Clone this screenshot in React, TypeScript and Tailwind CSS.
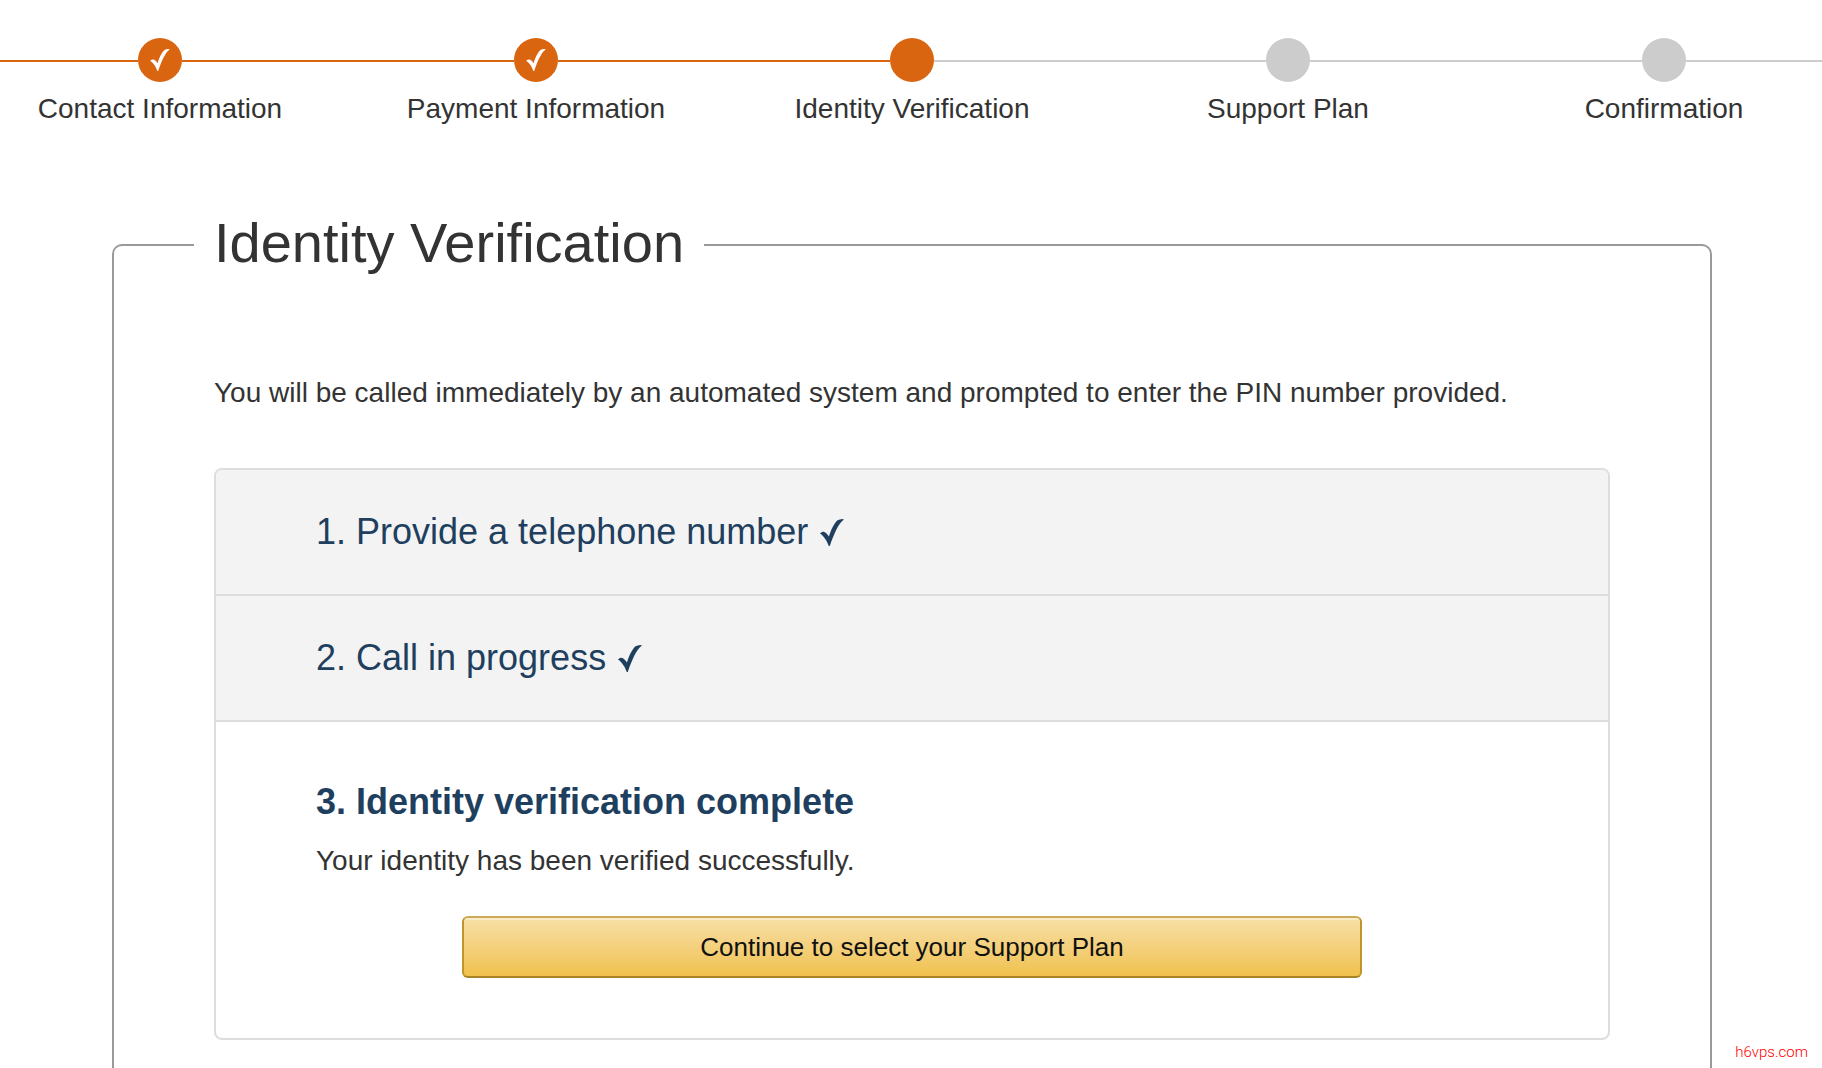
import React from 'react';
import { clsx } from 'clsx';

type StepStatus = 'done' | 'current' | 'upcoming';

interface WizardStep {
  label: string;
  status: StepStatus;
}

const wizardSteps: WizardStep[] = [
  { label: 'Contact Information', status: 'done' },
  { label: 'Payment Information', status: 'done' },
  { label: 'Identity Verification', status: 'current' },
  { label: 'Support Plan', status: 'upcoming' },
  { label: 'Confirmation', status: 'upcoming' },
];

const finishedSteps = ['1. Provide a telephone number', '2. Call in progress'];

const CheckMark: React.FC<{ className?: string }> = ({ className }) => (
  <svg viewBox="0 0 24 27" fill="currentColor" className={className} aria-hidden="true">
    <path d="M0 14.4C1.2 13.2 2.8 12.6 4 12.9C6 13.4 7.6 15.2 8.9 17.6C10.4 12.4 12.8 6.8 15.8 3C17.6 .8 19.6 .1 23.6 .1L23.4 1C19 4.2 14.4 13.4 9.8 27H8.8C7.4 22.6 4 17 0 14.4Z" />
  </svg>
);

const ProgressStep: React.FC<{ step: WizardStep }> = ({ step }) => {
  const reached = step.status !== 'upcoming';

  return (
    <li
      className="flex flex-col items-center"
      aria-current={step.status === 'current' ? 'step' : undefined}
    >
      <div className="flex w-full items-center">
        <span className={clsx('mt-0.5 h-0.5 flex-1', reached ? 'bg-[#da6510]' : 'bg-[#cccccc]')} />
        <span
          className={clsx(
            'flex size-11 items-center justify-center rounded-full text-white',
            reached ? 'bg-[#da6510]' : 'bg-[#cccccc]'
          )}
        >
          {step.status === 'done' && <CheckMark className="h-[22px] w-5" />}
        </span>
        <span
          className={clsx(
            'mt-0.5 h-0.5 flex-1',
            step.status === 'done' ? 'bg-[#da6510]' : 'bg-[#cccccc]'
          )}
        />
      </div>
      <span className="mt-[7px] leading-10 whitespace-nowrap">{step.label}</span>
    </li>
  );
};

export default function App() {
  return (
    <div className="relative flex min-h-screen flex-col overflow-hidden bg-white font-['Liberation_Sans',Arial,sans-serif] text-[28px] text-[#333333]">
      {/* the track runs past both edges of the window */}
      <nav aria-label="Sign-up progress" className="-mr-[30px] -ml-7 pt-[38px]">
        <ol className="grid grid-cols-5">
          {wizardSteps.map((step) => (
            <ProgressStep key={step.label} step={step} />
          ))}
        </ol>
      </nav>

      <main className="mt-[78px] mr-[110px] ml-28 flex grow flex-col">
        <fieldset className="grow rounded-t-[10px] border-2 border-b-0 border-[#999999] px-[100px] pb-7">
          <legend className="-ml-5 px-5 pb-1 text-[56px] leading-[72px]">
            Identity Verification
          </legend>

          <p className="mt-[90px] leading-10">
            You will be called immediately by an automated system and prompted to enter the PIN
            number provided.
          </p>

          <div className="mt-[55px] overflow-hidden rounded-lg border-2 border-[#dddddd]">
            {finishedSteps.map((title) => (
              <div
                key={title}
                className="flex items-center gap-3 border-b-2 border-[#dddddd] bg-[#f3f3f3] px-[100px] py-10 text-[#1f3f5f]"
              >
                <h2 className="text-4xl leading-[44px]">{title}</h2>
                <CheckMark className="h-[27px] w-6" />
              </div>
            ))}

            <section className="px-[100px] pt-[58px] pb-15">
              <h2 className="text-4xl leading-[44px] font-bold text-[#1f3f5f]">
                3. Identity verification complete
              </h2>
              <p className="mt-[17px] leading-10">Your identity has been verified successfully.</p>
              <button
                type="button"
                className="mx-auto mt-[35px] block h-[62px] w-full max-w-[900px] rounded-md border-2 border-[#bf942a] border-t-[#cba957] border-b-[#aa8326] bg-linear-to-b from-[#f7dfa5] to-[#f0c14b] text-[26px] text-[#111111] shadow-[inset_0_2px_0_rgba(255,255,255,0.4)]"
              >
                Continue to select your Support Plan
              </button>
            </section>
          </div>
        </fieldset>
      </main>

      <span className="absolute right-3.5 bottom-1.5 font-[Roboto,sans-serif] text-[15px] leading-5 font-light text-[#ff0000]">
        h6vps.com
      </span>
    </div>
  );
}
